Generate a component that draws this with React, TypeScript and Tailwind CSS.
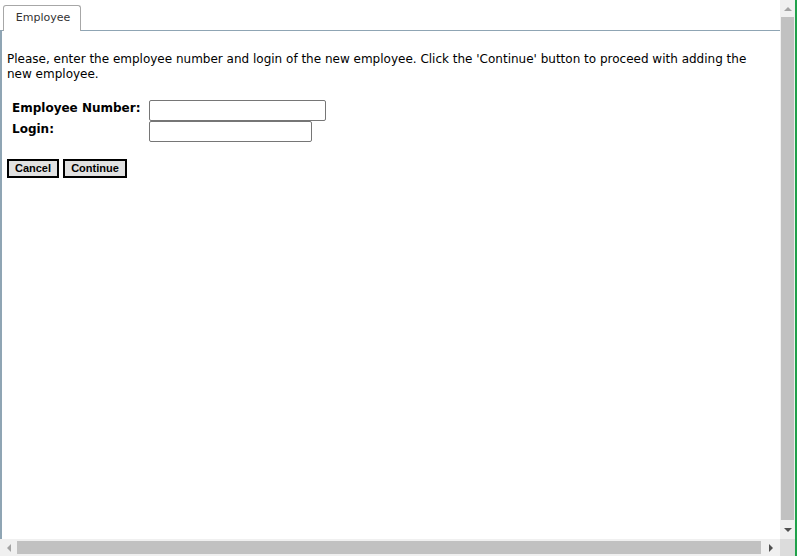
const App = () => {
  return (
    <div className="flex w-[797px] h-[556px] bg-white overflow-hidden font-['DejaVu_Sans',sans-serif]">
      <div className="flex flex-col w-[795px] h-full">
        <div className="flex h-[539px]">
          {/* page content */}
          <div className="flex flex-col w-[780px] h-full">
            <div className="flex items-end h-[31px]">
              <div className="w-[3px] h-[1px] bg-[#8fa5b4]" />
              <div className="flex items-center justify-center w-[78px] h-[26px] border border-b-0 border-[#a7a7a7] rounded-t-[3px] text-[11px] text-[#333] pb-[1px] pl-[2px]">
                Employee
              </div>
              <div className="flex-1 h-[1px] bg-[#8fa5b4]" />
            </div>
            <div className="flex-1 border-l-2 border-[#8fa5b4] pl-[5px] pr-[20px] pt-[21px] text-black">
              <p className="text-[12px] leading-[15px]">
                Please, enter the employee number and login of the new employee. Click the 'Continue' button to proceed with adding the new employee.
              </p>
              <table className="mt-[18px] ml-[5px] border-collapse">
                <tbody>
                  <tr>
                    <td className="text-[12px] font-bold pr-[9px] align-top leading-[14px] pt-[1px]">Employee Number:</td>
                    <td className="p-0">
                      <input className="block w-[177px] h-[21px] border border-[#767676] rounded-[2px]" />
                    </td>
                  </tr>
                  <tr>
                    <td className="text-[12px] font-bold align-top leading-[14px] pt-[1px]">Login:</td>
                    <td className="p-0">
                      <input className="block w-[163px] h-[21px] border border-[#767676] rounded-[2px]" />
                    </td>
                  </tr>
                </tbody>
              </table>
              <div className="flex gap-[4px] mt-[17px] font-['Liberation_Sans',sans-serif]">
                <button className="w-[52px] h-[19px] border-2 border-black bg-[#e1e1e1] text-[11px] font-bold leading-none">
                  Cancel
                </button>
                <button className="w-[64px] h-[19px] border-2 border-black bg-[#e1e1e1] text-[11px] font-bold leading-none">
                  Continue
                </button>
              </div>
            </div>
          </div>
          {/* vertical scrollbar */}
          <div className="flex flex-col items-center w-[15px] h-full bg-[#f0f0f0]">
            <div className="flex items-center justify-center h-[17px] w-full">
              <div className="w-0 h-0 border-l-[4px] border-r-[4px] border-b-[4px] border-l-transparent border-r-transparent border-b-[#a3a3a3]" />
            </div>
            <div className="flex-1 w-[13px] bg-[#c1c1c1]" />
            <div className="flex items-center justify-center h-[19px] w-full">
              <div className="w-0 h-0 border-l-[4px] border-r-[4px] border-t-[4px] border-l-transparent border-r-transparent border-t-[#505050]" />
            </div>
          </div>
        </div>
        {/* horizontal scrollbar */}
        <div className="flex items-center h-[17px] bg-[#f0f0f0]">
          <div className="flex items-center justify-center w-[17px] h-full">
            <div className="w-0 h-0 border-t-[4px] border-b-[4px] border-r-[4px] border-t-transparent border-b-transparent border-r-[#a3a3a3]" />
          </div>
          <div className="w-[744px] h-[13px] bg-[#c1c1c1]" />
          <div className="flex items-center justify-center w-[19px] h-full">
            <div className="w-0 h-0 border-t-[4px] border-b-[4px] border-l-[4px] border-t-transparent border-b-transparent border-l-[#505050]" />
          </div>
          <div className="w-[15px] h-full bg-[#dcdcdc]" />
        </div>
      </div>
      <div className="w-[2px] h-full bg-[#1ea14a]" />
    </div>
  );
};

export default App;
